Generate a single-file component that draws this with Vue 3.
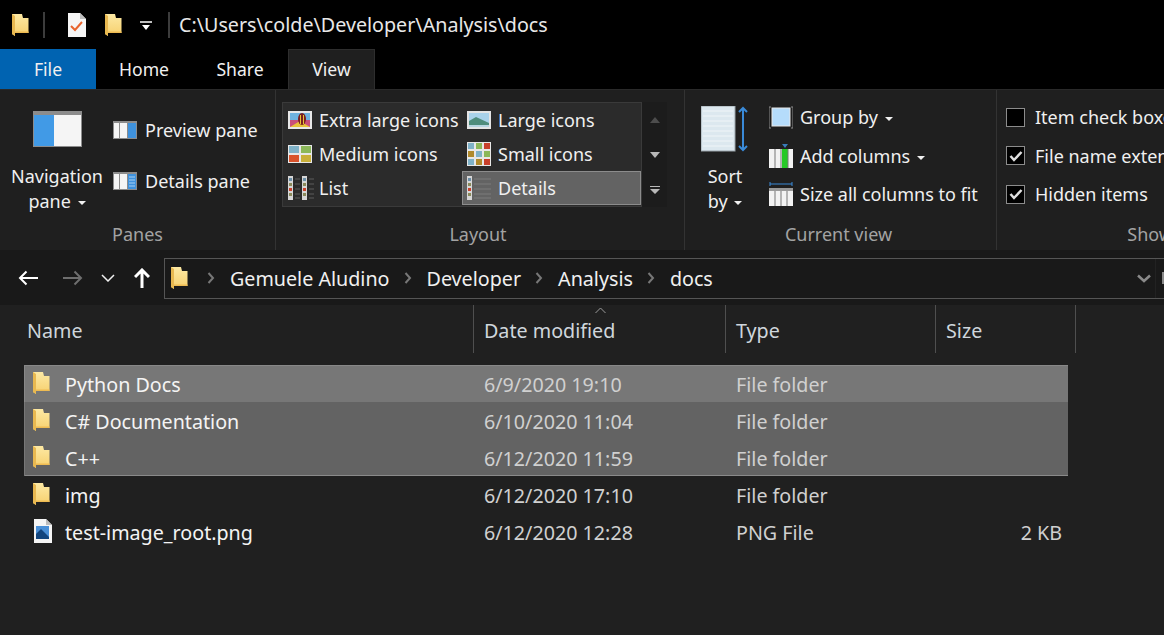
<template>
  <div class="explorer">
    <svg class="defs" width="0" height="0">
      <defs>
        <linearGradient id="folderfill" x1="0" y1="0" x2="0" y2="1">
          <stop offset="0" stop-color="#fde9a4" />
          <stop offset="1" stop-color="#f6cf6c" />
        </linearGradient>
      </defs>
      <symbol id="folder" viewBox="0 0 17 24">
        <path d="M0 1H10L11 5H16.500V20H3V23L0 21Z" fill="url(#folderfill)" />
        <path d="M3 18.500H16.500V20H3Z" fill="#eebb52" />
        <path d="M0 1L3 3V23L0 21Z" fill="#e8b850" />
      </symbol>
      <symbol id="page" viewBox="0 0 19 24">
        <path d="M1 0H13L19 6V24H1Z" fill="#f5f5f5" />
        <path d="M13 0L19 6H13Z" fill="#bdbdbd" />
      </symbol>
      <symbol id="photo" viewBox="0 0 24 18">
        <rect width="24" height="18" fill="#e4e4e4" />
        <rect x="2" y="2" width="20" height="14" fill="#a9d2ea" />
        <path d="M2 16V10L9 6L22 12V16Z" fill="#4f8d7c" />
        <path d="M2 16V14H22V16Z" fill="#b7d6e2" />
      </symbol>
      <symbol id="thumb" viewBox="0 0 24 18">
        <rect width="24" height="18" fill="#e8e8e8" />
        <rect x="2" y="2" width="20" height="14" fill="#c94f7a" />
        <rect x="2" y="2" width="20" height="7" fill="#6fb3e0" />
        <path d="M2 16L12 10L22 16Z" fill="#e8c23a" />
        <ellipse cx="14" cy="8" rx="4" ry="6" fill="#7a1f1f" />
        <rect x="12" y="4" width="1" height="9" fill="#e8c23a" />
        <rect x="15" y="4" width="1" height="9" fill="#e8c23a" />
      </symbol>
      <symbol id="tiles" viewBox="0 0 24 18">
        <rect width="24" height="18" fill="#e8e8e8" />
        <rect x="1" y="1" width="10" height="7" fill="#7fb2c8" />
        <rect x="13" y="1" width="10" height="7" fill="#8cb85a" />
        <rect x="1" y="10" width="10" height="7" fill="#d9532c" />
        <rect x="13" y="10" width="10" height="7" fill="#c9b03a" />
      </symbol>
      <symbol id="smalltiles" viewBox="0 0 24 24">
        <rect width="24" height="24" fill="#e8e8e8" />
        <rect x="1" y="1" width="6" height="6" fill="#7fb2c8" />
        <rect x="9" y="1" width="6" height="6" fill="#8cb85a" />
        <rect x="17" y="1" width="6" height="6" fill="#c8402c" />
        <rect x="1" y="9" width="6" height="6" fill="#b08a2c" />
        <rect x="9" y="9" width="6" height="6" fill="#7fb2c8" />
        <rect x="17" y="9" width="6" height="6" fill="#8cb85a" />
        <rect x="1" y="17" width="6" height="6" fill="#7fb2c8" />
        <rect x="9" y="17" width="6" height="6" fill="#b08a2c" />
        <rect x="17" y="17" width="6" height="6" fill="#c8402c" />
      </symbol>
      <symbol id="listcol" viewBox="0 0 12 24">
        <rect width="5" height="24" fill="#d6d6d6" />
        <rect x="1" y="2" width="3" height="3" fill="#6c8fa8" />
        <rect x="1" y="7" width="3" height="3" fill="#8a8a5a" />
        <rect x="1" y="12" width="3" height="3" fill="#c8402c" />
        <rect x="1" y="17" width="3" height="3" fill="#8a8a5a" />
        <path d="M7 3H12M7 8H12M7 13H12M7 18H12M7 22H12" stroke="#5c5c5c" />
      </symbol>
    </svg>

    <div class="titlebar">
      <svg class="folder title-folder"><use href="#folder" /></svg>
      <span class="qa-sep"></span>
      <svg class="note" viewBox="0 0 19 24">
        <use href="#page" />
        <path d="M4 13L8 17L15 9" fill="none" stroke="#e8632c" stroke-width="2" />
      </svg>
      <svg class="folder qa-folder"><use href="#folder" /></svg>
      <svg class="qa-drop" viewBox="0 0 12 10">
        <path d="M0 1H12" stroke="#fff" stroke-width="1.500" />
        <path d="M2 4H10L6 9Z" fill="#fff" />
      </svg>
      <span class="qa-sep last"></span>
      <span class="path">C:\Users\colde\Developer\Analysis\docs</span>
    </div>

    <div class="tabs">
      <div class="tab file">File</div>
      <div class="tab home">Home</div>
      <div class="tab share">Share</div>
      <div class="tab view">View</div>
    </div>

    <div class="ribbon">
      <section class="group panes">
        <div class="group-body panes-body">
          <div class="big-btn nav-btn">
            <svg class="nav-icon" viewBox="0 0 49 36">
              <rect width="49" height="36" fill="#8c8c8c" />
              <rect x="1" y="4" width="20" height="31" fill="#419ae6" />
              <rect x="21" y="4" width="27" height="31" fill="#f5f5f5" />
            </svg>
            <span class="big-label">Navigation<br />pane <i class="caret"></i></span>
          </div>
          <div class="pane-list">
            <div v-for="p in paneItems" :key="p.label" class="pane-item">
              <svg class="pane-icon" viewBox="0 0 24 18">
                <rect width="24" height="18" fill="#8c8c8c" />
                <rect x="1" y="2" width="5" height="15" fill="#f5f5f5" />
                <rect x="7" y="2" width="7" height="15" fill="#f5f5f5" />
                <rect x="15" y="2" width="8" height="15" fill="#3f92dd" />
                <path v-if="p.lines" d="M16 5H22M16 8H22M16 11H22M16 14H22" stroke="#a9d0f2" />
              </svg>
              {{ p.label }}
            </div>
          </div>
        </div>
        <div class="group-label">Panes</div>
      </section>

      <section class="group layout">
        <div class="group-body layout-body">
          <div class="gallery">
            <div v-for="v in views" :key="v.label" class="view-item" :class="{ active: v.active }">
              <span class="view-icon">
                <svg v-if="v.icon === 'list'" class="listcol"><use href="#listcol" /></svg>
                <svg v-if="v.icon === 'list'" class="listcol"><use href="#listcol" /></svg>
                <svg v-else-if="v.icon === 'details'" class="detailcol" viewBox="0 0 24 24">
                  <rect width="5" height="24" fill="#d6d6d6" />
                  <rect x="1" y="2" width="3" height="3" fill="#6c8fa8" />
                  <rect x="1" y="7" width="3" height="3" fill="#8a8a5a" />
                  <rect x="1" y="12" width="3" height="3" fill="#c8402c" />
                  <rect x="1" y="17" width="3" height="3" fill="#8a8a5a" />
                  <path d="M7 3H24M7 8H24M7 13H24M7 18H24M7 22H24" stroke="#7c7c7c" />
                </svg>
                <svg v-else :class="v.icon"><use :href="'#' + v.icon" /></svg>
              </span>
              {{ v.label }}
            </div>
          </div>
          <div class="gallery-scroll">
            <svg viewBox="0 0 10 8"><path d="M5 1L10 7H0Z" fill="#4d4d4d" /></svg>
            <svg viewBox="0 0 10 8"><path d="M0 1H10L5 7Z" fill="#b8b8b8" /></svg>
            <svg viewBox="0 0 10 8"><path d="M0 0H10V1H0ZM0 3H10L5 8Z" fill="#b8b8b8" /></svg>
          </div>
        </div>
        <div class="group-label">Layout</div>
      </section>

      <section class="group current">
        <div class="group-body current-body">
          <div class="big-btn sort-btn">
            <svg class="sort-icon" viewBox="0 0 48 46">
              <rect width="34" height="45" fill="#dce8ef" stroke="#9aa4aa" />
              <path d="M2 5H32M2 10H32M2 15H32M2 20H32M2 25H32M2 30H32M2 35H32M2 40H32" stroke="#f0f5f8" />
              <path d="M42 2V44M38 6L42 2L46 6M38 40L42 44L46 40" fill="none" stroke="#3a8ad8" stroke-width="2" />
            </svg>
            <span class="big-label">Sort<br />by <i class="caret"></i></span>
          </div>
          <div class="current-list">
            <div class="current-item">
              <svg class="cv-icon" viewBox="0 0 24 24">
                <path d="M2 2H0V23H2M22 2H24V23H22" fill="none" stroke="#8c8c8c" />
                <rect x="3" y="3" width="18" height="18" fill="#b5dcfb" stroke="#e8e8e8" />
              </svg>
              <span>Group by <i class="caret"></i></span>
            </div>
            <div class="current-item">
              <svg class="cv-icon" viewBox="0 0 24 24">
                <rect y="5" width="24" height="19" fill="#f2f2f2" />
                <rect x="13" y="5" width="6" height="19" fill="#26c926" />
                <path d="M6 5V24M12 5V24M19 5V24" stroke="#777" />
                <path d="M13 0H19L16 4Z" fill="#3a7cb8" />
              </svg>
              <span>Add columns <i class="caret"></i></span>
            </div>
            <div class="current-item">
              <svg class="cv-icon" viewBox="0 0 24 24">
                <path d="M1 2H23M1 0V4M23 0V4" stroke="#3a8ad8" />
                <rect y="6" width="24" height="18" fill="#f2f2f2" />
                <rect y="6" width="24" height="3" fill="#9a9a9a" />
                <path d="M6 9V24M12 9V24M18 9V24" stroke="#777" />
              </svg>
              <span>Size all columns to fit</span>
            </div>
          </div>
        </div>
        <div class="group-label">Current view</div>
      </section>

      <section class="group show">
        <div class="group-body show-body">
          <div v-for="c in checks" :key="c.label" class="check-row">
            <span class="checkbox">
              <svg v-if="c.on" viewBox="0 0 14 12">
                <path d="M1.500 6L5 10L12.500 2" fill="none" stroke="#e0e0e0" stroke-width="2.500" />
              </svg>
            </span>
            {{ c.label }}
          </div>
        </div>
        <div class="group-label">Show/hide</div>
      </section>
    </div>

    <div class="navbar">
      <div class="nav-arrows">
        <svg class="arrow" viewBox="0 0 20 16">
          <path d="M20 8H2M8.500 1.500L2 8L8.500 14.500" fill="none" stroke="#fff" stroke-width="2" />
        </svg>
        <svg class="arrow fwd" viewBox="0 0 20 16">
          <path d="M0 8H18M11.500 1.500L18 8L11.500 14.500" fill="none" stroke="#6e6e6e" stroke-width="2" />
        </svg>
        <svg class="down" viewBox="0 0 14 8">
          <path d="M1 1L7 7L13 1" fill="none" stroke="#f0f0f0" stroke-width="1.500" />
        </svg>
        <svg class="up" viewBox="0 0 16 20">
          <path d="M8 20V2.500M1 9L8 2L15 9" fill="none" stroke="#fff" stroke-width="3" />
        </svg>
      </div>
      <div class="address">
        <svg class="folder addr-folder"><use href="#folder" /></svg>
        <template v-for="c in crumbs" :key="c">
          <svg class="crumb-sep" viewBox="0 0 8 12">
            <path d="M1.500 1L6 6L1.500 11" fill="none" stroke="#777" stroke-width="2" />
          </svg>
          <span class="crumb">{{ c }}</span>
        </template>
        <svg class="addr-drop" viewBox="0 0 14 9">
          <path d="M1 1.500L7 7L13 1.500" fill="none" stroke="#8a8a8a" stroke-width="2.500" />
        </svg>
        <span class="refresh"></span>
      </div>
    </div>

    <div class="files">
      <div class="header">
        <div class="col name-col">Name</div>
        <div class="col date-col">Date modified
          <svg class="sort-mark" viewBox="0 0 10 5"><path d="M0 5L5 0L10 5" fill="none" stroke="#9a9a9a" /></svg>
        </div>
        <div class="col type-col">Type</div>
        <div class="col size-col">Size</div>
      </div>
      <div class="rows">
        <div v-for="f in files" :key="f.name" class="row" :class="f.state">
          <svg v-if="f.type === 'File folder'" class="folder row-icon"><use href="#folder" /></svg>
          <svg v-else class="png-icon" viewBox="0 0 19 24">
            <use href="#page" />
            <rect x="3" y="7" width="13" height="13" fill="#4a90d8" />
            <path d="M3 20V15L8 10L16 18V20Z" fill="#12457e" />
          </svg>
          <span class="f-name">{{ f.name }}</span>
          <span class="f-date">{{ f.date }}</span>
          <span class="f-type">{{ f.type }}</span>
          <span class="f-size">{{ f.size }}</span>
        </div>
      </div>
    </div>
  </div>
</template>

<script setup>
const paneItems = [
  { label: 'Preview pane', lines: false },
  { label: 'Details pane', lines: true },
];

const views = [
  { label: 'Extra large icons', icon: 'thumb' },
  { label: 'Large icons', icon: 'photo' },
  { label: 'Medium icons', icon: 'tiles' },
  { label: 'Small icons', icon: 'smalltiles' },
  { label: 'List', icon: 'list' },
  { label: 'Details', icon: 'details', active: true },
];

const checks = [
  { label: 'Item check boxes', on: false },
  { label: 'File name extensions', on: true },
  { label: 'Hidden items', on: true },
];

const crumbs = ['Gemuele Aludino', 'Developer', 'Analysis', 'docs'];

const files = [
  { name: 'Python Docs', date: '6/9/2020 19:10', type: 'File folder', size: '', state: 'hot' },
  { name: 'C# Documentation', date: '6/10/2020 11:04', type: 'File folder', size: '', state: 'sel' },
  { name: 'C++', date: '6/12/2020 11:59', type: 'File folder', size: '', state: 'sel' },
  { name: 'img', date: '6/12/2020 17:10', type: 'File folder', size: '', state: '' },
  { name: 'test-image_root.png', date: '6/12/2020 12:28', type: 'PNG File', size: '2 KB', state: '' },
];
</script>

<style>
html,
body {
  margin: 0;
  background: #202020;
  overflow: hidden;
}
</style>

<style scoped>
.explorer {
  width: 1164px;
  height: 635px;
  overflow: hidden;
  background: #202020;
  color: #f0f0f0;
  font-family: "Noto Sans", "Open Sans", sans-serif;
  font-size: 18px;
}

.defs {
  position: absolute;
}

.folder {
  width: 17px;
  height: 24px;
  flex: none;
}

.titlebar {
  height: 49px;
  background: #000;
  display: flex;
  align-items: center;
  box-sizing: border-box;
  padding-left: 12px;
}

.title-folder {
  margin-right: 14px;
}

.qa-sep {
  width: 2px;
  height: 26px;
  background: #3c3c3c;
  margin-right: 22px;
  flex: none;
}

.qa-sep.last {
  margin: 0 9px 0 16px;
}

.note {
  width: 19px;
  height: 24px;
  margin-right: 19px;
}

.qa-drop {
  width: 12px;
  height: 10px;
  margin: 3px 0 0 18px;
}

.path {
  font-size: 19.7px;
  color: #e8e8e8;
}

.tabs {
  height: 40px;
  background: #000;
  display: flex;
  font-size: 17.6px;
}

.tab {
  display: flex;
  align-items: center;
  justify-content: center;
  color: #f0f0f0;
}

.tab.file {
  width: 96px;
  background: #0063b1;
}

.tab.home {
  width: 96px;
}

.tab.share {
  width: 96px;
}

.tab.view {
  width: 87px;
  background: #1f1f1f;
  box-shadow: inset 0 1px 0 #2e2e2e, inset 1px 0 0 #2e2e2e, inset -1px 0 0 #2e2e2e;
}

.ribbon {
  height: 161px;
  background: #1f1f1f;
  display: flex;
  border-top: 1px solid #2a2a2a;
  box-sizing: border-box;
}

.group {
  flex: none;
  display: flex;
  flex-direction: column;
  border-right: 1px solid #333;
  box-sizing: border-box;
}

.group-body {
  height: 130px;
  flex: none;
  box-sizing: border-box;
}

.group-label {
  text-align: center;
  color: #a3a3a3;
  font-size: 18px;
  line-height: 24px;
  margin-top: 2px;
  padding-right: 4px;
}

.panes {
  width: 276px;
}

.panes .group-label {
  padding-right: 0;
}

.panes-body {
  display: flex;
  padding: 21px 0 0 11px;
}

.big-btn {
  display: flex;
  flex-direction: column;
  align-items: center;
}

.big-label {
  text-align: center;
  line-height: 24.5px;
}

.nav-btn {
  width: 92px;
}

.nav-icon {
  width: 49px;
  height: 36px;
  margin-bottom: 17px;
}

.caret {
  display: inline-block;
  width: 0;
  height: 0;
  border-left: 4px solid transparent;
  border-right: 4px solid transparent;
  border-top: 4px solid #f0f0f0;
  vertical-align: 3px;
  margin-left: 2px;
}

.pane-list {
  margin-left: 10px;
  padding-top: 6px;
  display: flex;
  flex-direction: column;
  gap: 25px;
}

.pane-item {
  display: flex;
  align-items: center;
  gap: 8px;
  height: 26px;
}

.pane-icon {
  width: 24px;
  height: 18px;
}

.layout {
  width: 409px;
}

.layout-body {
  display: flex;
  padding: 12px 0 0 6px;
}

.gallery {
  width: 360px;
  height: 105px;
  box-sizing: border-box;
  background: #2b2b2b;
  border: 1px solid #3a3a3a;
  display: grid;
  grid-template-columns: 179px 179px;
  grid-auto-rows: 34px;
}

.view-item {
  display: flex;
  align-items: center;
  box-sizing: border-box;
  padding-left: 5px;
  white-space: nowrap;
}

.view-item.active {
  background: #636363;
  border: 1px solid #8c8c8c;
  padding-left: 4px;
}

.view-icon {
  width: 31px;
  display: flex;
  gap: 2px;
  flex: none;
}

.thumb,
.photo,
.tiles {
  width: 24px;
  height: 18px;
}

.smalltiles,
.detailcol {
  width: 24px;
  height: 24px;
}

.listcol {
  width: 12px;
  height: 24px;
}

.gallery-scroll {
  width: 25px;
  height: 105px;
  background: #1c1c1c;
  display: flex;
  flex-direction: column;
  align-items: center;
  justify-content: space-around;
}

.gallery-scroll svg {
  width: 10px;
  height: 8px;
}

.current {
  width: 312px;
}

.current-body {
  display: flex;
  padding: 16px 0 0 16px;
}

.sort-btn {
  width: 48px;
}

.sort-icon {
  width: 48px;
  height: 46px;
  margin-bottom: 12px;
}

.current-list {
  margin-left: 20px;
  margin-top: -2px;
  display: flex;
  flex-direction: column;
  gap: 12.500px;
}

.current-item {
  display: flex;
  align-items: center;
  gap: 7px;
  height: 26px;
  white-space: nowrap;
}

.cv-icon {
  width: 24px;
  height: 24px;
}

.show {
  width: 354px;
  border-right: none;
}

.show-body {
  padding: 14px 0 0 9px;
  display: flex;
  flex-direction: column;
  gap: 12.500px;
}

.check-row {
  display: flex;
  align-items: center;
  gap: 10px;
  height: 26px;
  white-space: nowrap;
}

.checkbox {
  width: 19px;
  height: 19px;
  box-sizing: border-box;
  background: #000;
  border: 1px solid #8c8c8c;
  display: flex;
  align-items: center;
  justify-content: center;
}

.checkbox svg {
  width: 14px;
  height: 12px;
}

.navbar {
  height: 55px;
  background: #191919;
  display: flex;
  align-items: center;
  padding-top: 1px;
  box-sizing: border-box;
  font-size: 19.7px;
}

.nav-arrows {
  width: 164px;
  flex: none;
  display: flex;
  align-items: center;
  padding-left: 18px;
  box-sizing: border-box;
}

.arrow {
  width: 20px;
  height: 16px;
}

.arrow.fwd {
  margin-left: 25px;
}

.down {
  width: 14px;
  height: 8px;
  margin-left: 18px;
}

.up {
  width: 16px;
  height: 20px;
  margin-left: 19px;
}

.address {
  flex: 1;
  height: 41px;
  border: 1px solid #555;
  border-right: none;
  box-sizing: border-box;
  display: flex;
  align-items: center;
  padding-left: 6px;
}

.crumb-sep {
  width: 8px;
  height: 12px;
  margin: 0 15px 0 14px;
}

.addr-folder {
  margin-right: 5px;
}

.crumb {
  white-space: nowrap;
  color: #f0f0f0;
}

.addr-drop {
  width: 14px;
  height: 9px;
  margin-left: auto;
  margin-right: 4px;
}

.refresh {
  width: 9px;
  height: 100%;
  box-sizing: border-box;
  border-left: 1px solid #222;
  display: flex;
  align-items: center;
  justify-content: flex-end;
}

.refresh::after {
  content: "";
  width: 2px;
  height: 12px;
  background: #8a8a8a;
}

.files {
  background: #202020;
  font-size: 19.7px;
}

.header {
  height: 48px;
  display: flex;
  margin-bottom: 12px;
}

.col {
  position: relative;
  box-sizing: border-box;
  border-right: 1px solid #4f4f4f;
  display: flex;
  align-items: center;
  padding-left: 10px;
  color: #cfd6dc;
  padding-top: 2px;
}

.name-col {
  width: 474px;
  padding-left: 27px;
}

.date-col {
  width: 252px;
}

.type-col {
  width: 210px;
}

.size-col {
  width: 140px;
}

.sort-mark {
  position: absolute;
  left: 121px;
  top: 3px;
  width: 11px;
  height: 5px;
}

.rows {
  padding-left: 24px;
}

.row {
  width: 1044px;
  height: 37px;
  display: grid;
  grid-template-columns: 32px 419px 252px 1fr 100px;
  align-items: center;
  box-sizing: border-box;
  padding: 1px 6px 0 9px;
}

.row.hot {
  background: #777;
  box-shadow: inset 0 1px 0 #888, inset 1px 0 0 #888;
}

.row.sel {
  background: #636363;
  box-shadow: inset 1px 0 0 #777;
}

.row.sel:nth-child(3) {
  box-shadow: inset 1px 0 0 #777, inset 0 -1px 0 #8a8a8a;
}

.row-icon {
  margin-top: -3px;
}

.png-icon {
  width: 19px;
  height: 24px;
  margin-top: -3px;
}

.f-name {
  white-space: nowrap;
  color: #f4f4f4;
}

.f-date,
.f-type {
  color: #d0d0d0;
}

.f-size {
  text-align: right;
  color: #d0d0d0;
}
</style>
